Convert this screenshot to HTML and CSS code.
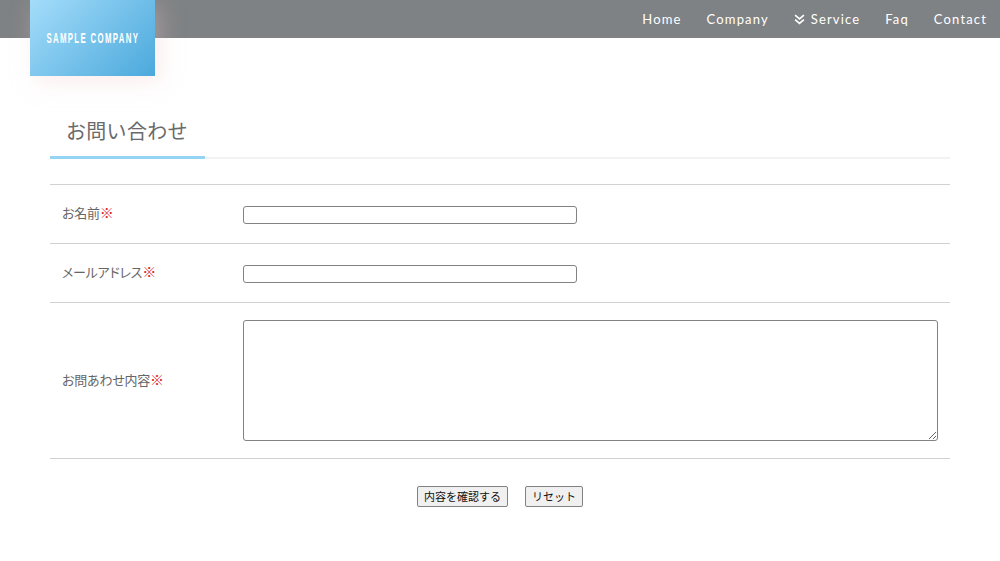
FILE: index.html
```html
<!DOCTYPE html>
<html lang="ja">
<head>
<meta charset="utf-8">
<title>お問い合わせ</title>
<link rel="stylesheet" href="styles.css">
</head>
<body>
<header class="header">
  <a class="logo" href="#"><span class="logo-text">SAMPLE COMPANY</span></a>
  <nav class="nav">
    <a href="#">Home</a>
    <a href="#">Company</a>
    <a href="#" class="has-sub"><svg class="chev" viewBox="0 0 10 10" width="11" height="11" aria-hidden="true"><path d="M1 1l4 3.4L9 1M1 5.2l4 3.4 4-3.4" fill="none" stroke="#fff" stroke-width="1.5"/></svg>Service</a>
    <a href="#">Faq</a>
    <a href="#">Contact</a>
  </nav>
</header>
<main class="main">
  <h2 class="title">お問い合わせ</h2>
  <form class="form">
    <div class="row">
      <label class="label">お名前<span class="req">※</span></label>
      <div class="field"><input class="text" type="text"></div>
    </div>
    <div class="row">
      <label class="label">メールアドレス<span class="req">※</span></label>
      <div class="field"><input class="text" type="text"></div>
    </div>
    <div class="row">
      <label class="label">お問あわせ内容<span class="req">※</span></label>
      <div class="field"><textarea class="area"></textarea></div>
    </div>
    <div class="actions">
      <button class="btn" type="button">内容を確認する</button>
      <button class="btn" type="button">リセット</button>
    </div>
  </form>
</main>
</body>
</html>
```
FILE: styles.css
```css
* { box-sizing: border-box; }
html, body { margin: 0; padding: 0; background: #fff; }
body {
  font-family: "Noto Sans CJK JP", "Liberation Sans", sans-serif;
  color: #666;
  height: 561px;
  overflow: hidden;
}
.header {
  position: relative;
  height: 38px;
  background: #7f8284;
  display: flex;
  justify-content: flex-end;
  align-items: center;
  padding: 0 13px 0 0;
}
.logo {
  position: absolute;
  left: 30px;
  top: 0;
  width: 125px;
  height: 76px;
  background: linear-gradient(135deg, #a4dcfa 0%, #4ba9dc 100%);
  box-shadow: 5px 5px 22px rgba(240, 200, 200, 0.35);
  text-decoration: none;
  display: flex;
  align-items: center;
  justify-content: center;
}
.logo-text {
  display: block;
  flex: none;
  white-space: nowrap;
  color: #fff;
  font-family: "Liberation Sans", sans-serif;
  font-weight: 700;
  font-size: 14px;
  letter-spacing: 2.35px;
  transform: scaleX(0.56);
}
.nav {
  display: flex;
  gap: 25px;
  align-items: center;
}
.nav a {
  color: #fff;
  font-family: "Lato", "Liberation Sans", sans-serif;
  font-size: 13px;
  font-weight: 400;
  letter-spacing: 1.15px;
  text-decoration: none;
  display: flex;
  align-items: center;
}
.chev { margin-right: 6px; }
.main { padding: 0 50px; }
.title {
  position: relative;
  margin: 0 0 25px;
  padding: 71px 0 0 16px;
  height: 121px;
  border-bottom: 2px solid #f2f2f2;
  font-size: 20px;
  letter-spacing: 0.3px;
  line-height: 44px;
  font-weight: 400;
  color: #6a6a6a;
}
.title::after {
  content: "";
  position: absolute;
  left: 0;
  bottom: -2px;
  width: 155px;
  height: 3px;
  background: #96d4f4;
}
.form { border-top: 1px solid #d2d2d2; }
.row {
  display: flex;
  align-items: center;
  border-bottom: 1px solid #d2d2d2;
  padding: 17px 12px;
}
.label {
  width: 181px;
  flex: none;
  margin-bottom: 4px;
  font-size: 13px;
  color: #666;
  letter-spacing: -0.25px;
  font-feature-settings: "palt";
}
.req { color: #d9232d; font-size: 14px; font-weight: 500; letter-spacing: 0; }
.field { flex: 1; display: flex; }
.text {
  width: 334px;
  height: 18px;
  padding: 0 2px;
  border: 1px solid #828282;
  border-radius: 3px;
  background: #fff;
  margin: 4px 0 2px;
}
.area {
  width: 695px;
  height: 121px;
  border: 1px solid #828282;
  border-radius: 3px;
  background: #fff;
  display: block;
}
.actions {
  display: flex;
  justify-content: center;
  gap: 17px;
  padding-top: 27px;
}
.btn {
  height: 21px;
  padding: 0 6px;
  border: 1px solid #828282;
  border-radius: 2px;
  background: #f0f0f0;
  color: #111;
  font-family: "Noto Sans CJK JP", sans-serif;
  font-size: 11px;
  line-height: 19px;
}
```
